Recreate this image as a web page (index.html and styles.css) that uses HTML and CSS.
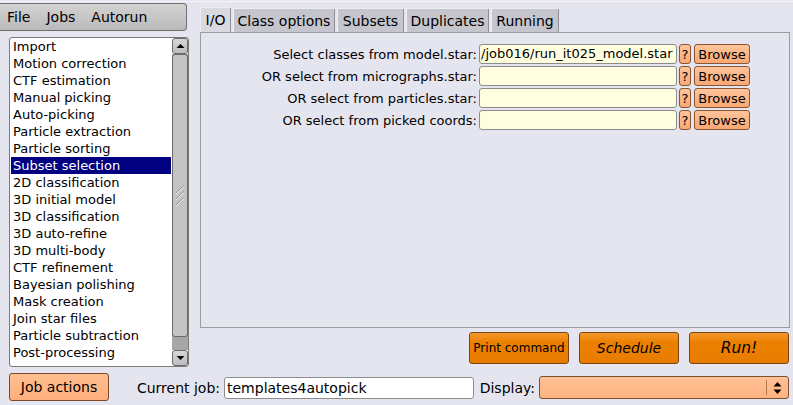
FILE: index.html
```html
<!DOCTYPE html>
<html lang="en">
  <head>
    <meta charset="UTF-8" />
    <meta name="viewport" content="width=device-width, initial-scale=1.0" />
    <title>RELION</title>
    <link rel="stylesheet" href="styles.css">
  </head>
  <body>
    <div class="window">
      <div class="top">
        <div class="side">
          <div class="menubar">
            <span>File</span>
            <span>Jobs</span>
            <span>Autorun</span>
          </div>
          <div class="joblist">
            <ul class="jobs">
              <li>Import</li>
              <li>Motion correction</li>
              <li>CTF estimation</li>
              <li>Manual picking</li>
              <li>Auto-picking</li>
              <li>Particle extraction</li>
              <li>Particle sorting</li>
              <li class="selected">Subset selection</li>
              <li>2D classification</li>
              <li>3D initial model</li>
              <li>3D classification</li>
              <li>3D auto-refine</li>
              <li>3D multi-body</li>
              <li>CTF refinement</li>
              <li>Bayesian polishing</li>
              <li>Mask creation</li>
              <li>Join star files</li>
              <li>Particle subtraction</li>
              <li>Post-processing</li>
            </ul>
            <div class="scrollbar">
              <div class="sb-btn">
                <svg width="9" height="6" viewBox="0 0 9 6"><path d="M0.5 5 L4.5 1 L8.5 5 Z" fill="#000"/></svg>
              </div>
              <div class="sb-track">
                <div class="sb-thumb">
                  <svg width="10" height="22" viewBox="0 0 10 22">
                    <path d="M1 8 L9 0.5 M1 14 L9 6.5 M1 20 L9 12.5" stroke="#8a8a8a" stroke-width="1"/>
                    <path d="M1 9 L9 1.5 M1 15 L9 7.5 M1 21 L9 13.5" stroke="#eeeeee" stroke-width="1"/>
                  </svg>
                </div>
              </div>
              <div class="sb-btn">
                <svg width="9" height="6" viewBox="0 0 9 6"><path d="M0.5 1 L4.5 5 L8.5 1 Z" fill="#000"/></svg>
              </div>
            </div>
          </div>
        </div>

        <div class="main">
          <div class="tabs">
            <div class="tab active tab-io">I/O</div>
            <div class="tab tab-class">Class options</div>
            <div class="tab tab-subsets">Subsets</div>
            <div class="tab tab-dup">Duplicates</div>
            <div class="tab tab-run">Running</div>
          </div>
          <div class="panel">
            <div class="field">
              <label>Select classes from model.star:</label>
              <div class="entry">/job016/run_it025_model.star</div>
              <button class="help">?</button>
              <button class="browse">Browse</button>
            </div>
            <div class="field">
              <label>OR select from micrographs.star:</label>
              <div class="entry"></div>
              <button class="help">?</button>
              <button class="browse">Browse</button>
            </div>
            <div class="field">
              <label>OR select from particles.star:</label>
              <div class="entry"></div>
              <button class="help">?</button>
              <button class="browse">Browse</button>
            </div>
            <div class="field">
              <label>OR select from picked coords:</label>
              <div class="entry"></div>
              <button class="help">?</button>
              <button class="browse">Browse</button>
            </div>
          </div>
          <div class="actions">
            <button class="run-btn print">Print command</button>
            <button class="run-btn big">Schedule</button>
            <button class="run-btn big run">Run!</button>
          </div>
        </div>
      </div>

      <div class="bottom">
        <button class="job-actions">Job actions</button>
        <label class="current-label">Current job:</label>
        <div class="current-job">templates4autopick</div>
        <label class="display-label">Display:</label>
        <div class="display">
          <span class="display-value"></span>
          <span class="display-arrows">
            <svg width="9" height="14" viewBox="0 0 9 14">
              <path d="M0.5 5.5 L4.5 1 L8.5 5.5 Z M0.5 8.5 L4.5 13 L8.5 8.5 Z" fill="#000"/>
            </svg>
          </span>
        </div>
      </div>
    </div>
  </body>
</html>
```

FILE: styles.css
```css
body {
  margin: 0;
  background-color: #e5e5ef;
  font-family: "DejaVu Sans", Verdana, sans-serif;
  color: #000;
}
.window {
  width: 793px;
  height: 405px;
  box-sizing: border-box;
  border-top: 1px solid #f4f4f8;
  margin-top: 1px;
  overflow: hidden;
}
.top {
  display: flex;
  height: 365px;
}
.side {
  width: 200px;
  flex: none;
}
.menubar {
  width: 187px;
  height: 28px;
  margin-top: 1px;
  box-sizing: border-box;
  border: 1px solid #6f6f6f;
  border-left: none;
  border-radius: 0 4px 4px 0;
  background: linear-gradient(#d2d2d2, #bababa);
  display: flex;
  align-items: center;
  padding-left: 7px;
  font-size: 14px;
}
.menubar span {
  margin-right: 16px;
}
.joblist {
  margin: 6px 0 0 9px;
  width: 180px;
  height: 330px;
  box-sizing: border-box;
  border: 1px solid #7a7a7a;
  border-radius: 3px;
  background: #fff;
  display: flex;
}
.jobs {
  list-style: none;
  margin: 0;
  padding: 0 1px;
  flex: 1;
  font-size: 13px;
}
.jobs li {
  height: 17px;
  line-height: 17px;
  padding-left: 2px;
  white-space: nowrap;
}
.jobs li.selected {
  background: #000080;
  color: #fff;
}
.scrollbar {
  width: 16px;
  display: flex;
  flex-direction: column;
}
.sb-btn {
  height: 16px;
  box-sizing: border-box;
  border: 1px solid #6a6a6a;
  border-radius: 3px;
  background: linear-gradient(#d8d8d8, #bdbdbd);
  display: flex;
  align-items: center;
  justify-content: center;
}
.sb-track {
  flex: 1;
  background: #a6a6a6;
}
.sb-thumb {
  height: 283px;
  box-sizing: border-box;
  border: 1px solid #6a6a6a;
  border-radius: 3px;
  background: #c4c4c4;
  display: flex;
  align-items: center;
  justify-content: center;
}
.main {
  flex: 1;
  padding: 5px 3px 0 0;
  display: flex;
  flex-direction: column;
}
.tabs {
  display: flex;
  align-items: flex-end;
  height: 25px;
  gap: 2px;
}
.tab {
  height: 24px;
  box-sizing: border-box;
  background: #c5c5cd;
  border-top: 1px solid #ececf2;
  border-left: 1px solid #ececf2;
  border-right: 1px solid #8e8e98;
  border-radius: 2px 2px 0 0;
  font-size: 14px;
  display: flex;
  align-items: center;
  justify-content: center;
}
.tab.active {
  height: 25px;
  background: #d9d9e0;
}
.tab-io { width: 31px; }
.tab-class { width: 102px; }
.tab-subsets { width: 67px; }
.tab-dup { width: 83px; }
.tab-run { width: 68px; }
.panel {
  height: 296px;
  box-sizing: border-box;
  border: 1px solid #9c9ca4;
  padding-top: 11px;
}
.field {
  display: flex;
  align-items: center;
  height: 20px;
  margin-bottom: 2px;
}
.field label {
  width: 278px;
  box-sizing: border-box;
  padding-right: 2px;
  text-align: right;
  font-size: 13px;
  white-space: nowrap;
}
.entry {
  width: 198px;
  height: 20px;
  box-sizing: border-box;
  margin-right: 2px;
  border: 1px solid #8c8c8c;
  border-radius: 3px;
  background: #ffffe0;
  font-size: 13px;
  line-height: 18px;
  padding-left: 1px;
  overflow: hidden;
  white-space: nowrap;
}
.help,
.browse {
  height: 20px;
  box-sizing: border-box;
  border: 1px solid #8a5532;
  border-radius: 3px;
  background: linear-gradient(#ffc49a, #f7a874);
  font-family: "DejaVu Sans", Verdana, sans-serif;
  font-size: 13px;
  padding: 0;
  color: #000;
}
.help {
  width: 12px;
  margin-right: 3px;
}
.browse {
  width: 56px;
}
.actions {
  display: flex;
  justify-content: flex-end;
  gap: 10px;
  margin-top: 4px;
  padding-right: 1px;
}
.run-btn {
  width: 100px;
  height: 32px;
  box-sizing: border-box;
  border: 1px solid #7a4410;
  border-radius: 3px;
  background: linear-gradient(#f29a30, #ec8000 30%, #e87c00);
  font-family: "DejaVu Sans", Verdana, sans-serif;
  font-size: 12px;
  color: #000;
  padding: 0;
}
.run-btn.big {
  font-size: 14px;
  font-style: italic;
}
.run-btn.run {
  font-size: 15.5px;
}
.bottom {
  display: flex;
  align-items: flex-start;
  margin-top: 6px;
  font-size: 14px;
}
.job-actions {
  margin-left: 9px;
  width: 100px;
  height: 28px;
  box-sizing: border-box;
  border: 1px solid #7a4a2a;
  border-radius: 3px;
  background: linear-gradient(#ffbf90, #ffaf7c);
  font-family: "DejaVu Sans", Verdana, sans-serif;
  font-size: 14px;
  color: #000;
  padding: 0;
}
.current-label,
.display-label {
  margin-top: 4px;
  height: 22px;
  line-height: 22px;
  text-align: right;
  box-sizing: border-box;
  white-space: nowrap;
}
.current-label {
  width: 113px;
  padding-right: 2px;
}
.current-job {
  margin: 4px 0 0 2px;
  width: 250px;
  height: 22px;
  box-sizing: border-box;
  border: 1px solid #8c8c8c;
  border-radius: 3px;
  background: #fff;
  line-height: 20px;
  padding-left: 2px;
  white-space: nowrap;
  overflow: hidden;
}
.display-label {
  width: 65px;
  padding-right: 4px;
}
.display {
  margin-top: 3px;
  width: 250px;
  height: 23px;
  box-sizing: border-box;
  border: 1px solid #7a5030;
  border-radius: 3px;
  background: linear-gradient(#ffc096, #ffb380);
  display: flex;
}
.display-value {
  flex: 1;
}
.display-arrows {
  width: 21px;
  margin: 3px 0;
  border-left: 1px solid #b07850;
  display: flex;
  align-items: center;
  justify-content: center;
}
```
